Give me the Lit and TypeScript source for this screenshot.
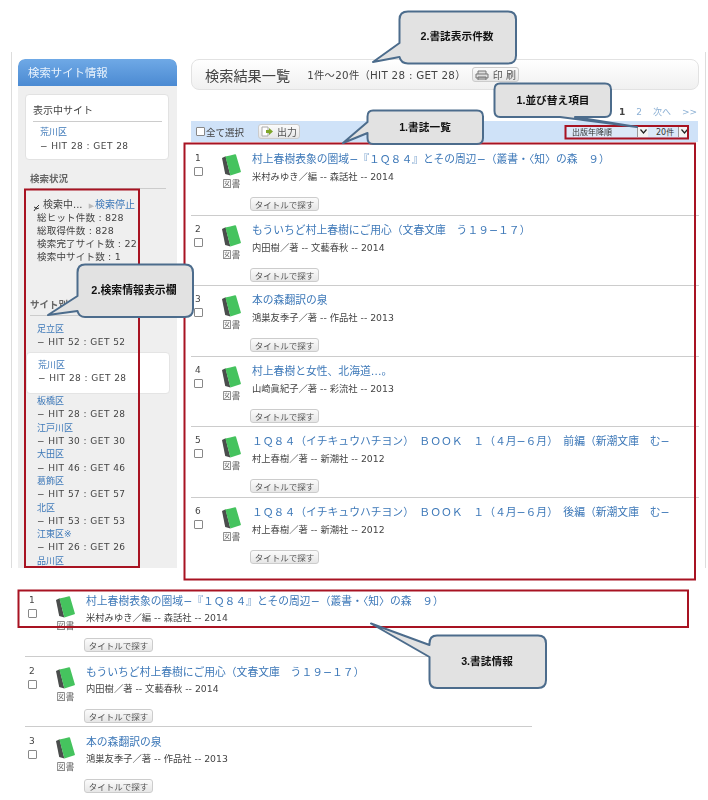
import { LitElement, html, css, svg } from "lit";
import { customElement } from "lit/decorators.js";

const BOOKS = [
  { t: "村上春樹表象の圏域−『１Ｑ８４』とその周辺−（叢書・〈知〉の森　９）", a: "米村みゆき／編 -- 森話社 -- 2014" },
  { t: "もういちど村上春樹にご用心（文春文庫　う１９−１７）", a: "内田樹／著 -- 文藝春秋 -- 2014" },
  { t: "本の森翻訳の泉", a: "鴻巣友季子／著 -- 作品社 -- 2013" },
  { t: "村上春樹と女性、北海道…。", a: "山崎眞紀子／著 -- 彩流社 -- 2013" },
  { t: "１Ｑ８４（イチキュウハチヨン）　ＢＯＯＫ　１（４月−６月）　前編（新潮文庫　む−", a: "村上春樹／著 -- 新潮社 -- 2012" },
  { t: "１Ｑ８４（イチキュウハチヨン）　ＢＯＯＫ　１（４月−６月）　後編（新潮文庫　む−", a: "村上春樹／著 -- 新潮社 -- 2012" },
];

const SITES = [
  { n: "足立区", h: 52 },
  { n: "荒川区", h: 28, on: true },
  { n: "板橋区", h: 28 },
  { n: "江戸川区", h: 30 },
  { n: "大田区", h: 46 },
  { n: "葛飾区", h: 57 },
  { n: "北区", h: 53 },
  { n: "江東区※", h: 26 },
  { n: "品川区", h: 0 },
];

const bookIcon = html`<svg class="book" width="19" height="22" viewBox="0 0 19 22">
  <path d="M0 4 L3.6 2.2 L8.4 21.4 L3.2 20 Z" fill="#4a4d4c"/>
  <path d="M3.4 2.4 Q8 1.4 13 .2 Q13.8 0 14 .8 L18.9 17.4 Q19 18 18.4 18.2 L8.4 21.4 Z" fill="#45c35e"/>
</svg>`;

function callout(d: string, label: string, x: number, y: number, size = 10.7) {
  return svg`<path d=${d} fill="#e2e2e2" stroke="#4c6c8c" stroke-width="2" stroke-linejoin="round"/>
    <text x=${x} y=${y} text-anchor="middle" font-size=${size} font-weight="700" fill="#111" font-family="'Liberation Sans','Noto Sans CJK JP',sans-serif">${label}</text>`;
}

@customElement("app-root")
export class AppRoot extends LitElement {
  static styles = css`
    :host {
      display: block;
      position: relative;
      width: 708px;
      height: 800px;
      overflow: hidden;
      background: #fff;
      font-family: "DejaVu Sans", "Noto Sans CJK JP", sans-serif;
      font-size: 9px;
      color: #444;
    }
    a { color: #3d78b8; text-decoration: none; }
    .soft { filter: blur(0.35px); padding-top: 52px; }
    .shot {
      height: 516px;
      margin: 0 2px 0 11px;
      padding: 7px 6px 0 6px;
      box-sizing: border-box;
      border-left: 1px solid #ddd;
      border-right: 1px solid #ddd;
      display: flex;
      gap: 14px;
    }
    .side {
      width: 159px;
      height: 509px;
      flex: none;
      overflow: hidden;
      background: #efefef;
      border-radius: 7px 7px 0 0;
      line-height: 13.3px;
    }
    .side-h {
      height: 27px;
      padding-left: 10px;
      display: flex;
      align-items: center;
      color: #e8f2fc;
      font-size: 11.4px;
      font-family: "Noto Sans CJK JP", sans-serif;
      background: linear-gradient(#6fa9e6, #4b8ad2);
      border-radius: 7px 7px 0 0;
    }
    .cur {
      margin: 8px 8px 0 7px;
      height: 66px;
      box-sizing: border-box;
      padding: 9px 6px 0 7px;
      background: #fff;
      border: 1px solid #e2e2e2;
      border-radius: 4px;
    }
    .cur h4, .hd {
      margin: 0;
      font-weight: 400;
      font-size: 9.5px;
      color: #444;
      border-bottom: 1px solid #ccc;
    }
    .cur h4 { padding-bottom: 4px; font-size: 10px; }
    .cur .site { margin: 4px 0 0 7px; }
    .hd {
      margin: 12px 11px 0 12px;
      padding-bottom: 3px;
      font-weight: 700;
      color: #666;
    }
    .status {
      margin: 8px 0 0 19px;
      height: 89px;
      position: relative;
      font-size: 9.5px;
      letter-spacing: .2px;
      white-space: nowrap;
    }
    .status .run { padding-left: 6px; padding-top: 1px; height: 12.3px; font-size: 10px; letter-spacing: 0; }
    .status .tri { color: #bbb; font-size: 7px; margin: 0 1px 0 3px; }
    .spin { position: absolute; left: -4px; top: 7px; color: #444; }
    .site { white-space: nowrap; letter-spacing: .45px; }
    .site a { display: block; letter-spacing: 0; }
    .list { margin-top: 7px; padding: 0 7px 0 19px; }
    .list .site.on {
      margin: 3px 0 1px -11px;
      height: 42px;
      padding: 6px 0 0 11px;
      box-sizing: border-box;
      background: #fff;
      border: 1px solid #e4e4e4;
      border-radius: 4px;
    }
    .main { flex: 1; min-width: 0; }
    .title {
      height: 31px;
      box-sizing: border-box;
      padding: 0 0 0 13px;
      display: flex;
      align-items: center;
      border: 1px solid #e2e2e2;
      border-radius: 8px;
      background: linear-gradient(#fff, #f0f0f0);
    }
    .title b {
      font-weight: 400;
      font-size: 14.2px;
      color: #444;
      font-family: "Noto Sans CJK JP", sans-serif;
    }
    .title .cnt { margin-left: 17px; font-size: 10.3px; letter-spacing: .3px; white-space: nowrap; }
    .btn {
      display: inline-flex;
      align-items: center;
      justify-content: center;
      box-sizing: border-box;
      border: 1px solid #ccc;
      border-radius: 3px;
      background: linear-gradient(#fbfbfb, #e6e6e6);
      color: #555;
      white-space: nowrap;
    }
    .print { margin-left: 6px; width: 47px; height: 15px; gap: 4px; font-size: 10px; }
    .pager {
      margin-top: 12px;
      height: 19px;
      padding-right: 2px;
      display: flex;
      justify-content: flex-end;
      align-items: center;
      gap: 11px;
      font-size: 9px;
      color: #8cb0d4;
    }
    .pager b { color: #444; }
    .pager a { color: inherit; }
    .bar {
      height: 21px;
      margin-right: 1px;
      padding: 0 9px 0 5px;
      display: flex;
      align-items: center;
      background: #cfe2f8;
      font-size: 9.5px;
    }
    .cb {
      display: block;
      width: 9px;
      height: 9px;
      flex: none;
      border: 1px solid #888;
      background: #fff;
      box-sizing: border-box;
      border-radius: 1px;
    }
    .bar .lab { margin-left: 1px; }
    .out { margin-left: 14px; width: 42px; height: 15px; gap: 3px; font-size: 10px; }
    .sels { margin-left: auto; display: flex; font-size: 8px; }
    .sel {
      height: 11px;
      display: flex;
      align-items: center;
      justify-content: space-between;
      padding-left: 5px;
      color: #333;
      background: #dce9f8;
    }
    .sel i {
      width: 11px;
      height: 11px;
      display: flex;
      align-items: center;
      justify-content: center;
      background: #f4f4f4;
      border-left: 1px solid #999;
      box-sizing: border-box;
    }
    .s1 { width: 81px; box-sizing: border-box; }
    .s2 { width: 41px; box-sizing: border-box; padding-left: 8px; }
    .row {
      height: 70.5px;
      box-sizing: border-box;
      border-bottom: 1px solid #ccc;
      display: flex;
      padding: 8px 0 0 3px;
    }
    .list-main { margin-top: 3px; }
    .list-main .row:last-child { border-bottom: 0; }
    .nc { width: 28px; flex: none; line-height: 10px; }
    .nc .num { padding-left: 1px; display: block; }
    .nc .cb { margin-top: 4px; }
    .ic { width: 30px; flex: none; margin-top: 1px; text-align: center; font-size: 9.5px; color: #666; line-height: 12px; }
    .ic .tp { display: block; margin-top: 2px; padding-right: 11px; font-size: 9px; white-space: nowrap; }
    .ic svg { display: block; }
    .tx { flex: 1; min-width: 0; white-space: nowrap; }
    .tx a { display: block; font-size: 10.8px; line-height: 14px; }
    .tx p { margin: 4px 0 0; line-height: 12px; font-size: 9.3px; color: #444; }
    .find { margin: 14px 0 0 -2px; width: 69px; height: 14px; font-size: 8.5px; }
    .lower { margin: 18px 0 0 25px; width: 507px; height: 220px; }
    .lower .row { padding-top: 9px; }
    .lower .row:last-child { border-bottom: 0; }
    .lower .tx p { margin-top: 3px; }
    .over { position: absolute; left: 0; top: 0; pointer-events: none; }
  `;

  private row(b: { t: string; a: string }, i: number) {
    return html`<div class="row">
      <div class="nc"><span class="num">${i + 1}</span><span class="cb"></span></div>
      <div class="ic">${bookIcon}<span class="tp">図書</span></div>
      <div class="tx">
        <a href="#">${b.t}</a>
        <p>${b.a}</p>
        <span class="btn find">タイトルで探す</span>
      </div>
    </div>`;
  }

  render() {
    return html`
      <div class="soft">
        <div class="shot">
          <aside class="side">
            <div class="side-h">検索サイト情報</div>
            <div class="cur">
              <h4>表示中サイト</h4>
              <div class="site"><a href="#">荒川区</a>− HIT 28 : GET 28</div>
            </div>
            <div class="hd">検索状況</div>
            <div class="status">
              <svg class="spin" width="7" height="8" viewBox="0 0 7 8"><path d="M1 7 L3 4 L1 3 M3 4 L6 1 M3 5 L6 4" stroke="#333" fill="none" stroke-width="1"/></svg>
              <div class="run">検索中... <span class="tri">▶</span><a href="#">検索停止</a></div>
              <div>総ヒット件数 : 828</div>
              <div>総取得件数 : 828</div>
              <div>検索完了サイト数 : 22</div>
              <div>検索中サイト数 : 1</div>
            </div>
            <div class="hd">サイト別</div>
            <div class="list">
              ${SITES.map((s) => html`<div class="site ${s.on ? "on" : ""}"><a href="#">${s.n}</a>${s.h ? `− HIT ${s.h} : GET ${s.h}` : ""}</div>`)}
            </div>
          </aside>
          <main class="main">
            <div class="title">
              <b>検索結果一覧</b>
              <span class="cnt">1件～20件（HIT 28 : GET 28）</span>
              <span class="btn print">
                <svg width="14" height="10" viewBox="0 0 14 10"><path d="M3 4V1h8v3M1 4h12v4H1zM3 7h8v3H3z" fill="#ddd" stroke="#777" stroke-width="1"/></svg>印 刷
              </span>
            </div>
            <div class="pager"><b>1</b><a href="#">2</a><span>次へ</span><span>&gt;&gt;</span></div>
            <div class="bar">
              <span class="cb"></span><span class="lab">全て選択</span>
              <span class="btn out">
                <svg width="13" height="11" viewBox="0 0 13 11"><path d="M1 1h6v9H1z" fill="#fff" stroke="#aaa"/><path d="M5 4h3V2l4 3.5L8 9V7H5z" fill="#7fa62a"/></svg>出力
              </span>
              <div class="sels">
                <div class="sel s1">出版年降順<i><svg width="7" height="5" viewBox="0 0 7 5"><path d="M.5 .5L3.5 4L6.5 .5" fill="none" stroke="#222" stroke-width="1.2"/></svg></i></div>
                <div class="sel s2">20件<i><svg width="7" height="5" viewBox="0 0 7 5"><path d="M.5 .5L3.5 4L6.5 .5" fill="none" stroke="#222" stroke-width="1.2"/></svg></i></div>
              </div>
            </div>
            <div class="list-main">${BOOKS.map((b, i) => this.row(b, i))}</div>
          </main>
        </div>
        <div class="lower">${BOOKS.slice(0, 3).map((b, i) => this.row(b, i))}</div>
      </div>
      <svg class="over" width="708" height="800" viewBox="0 0 708 800">
        <g fill="none" stroke="#a81322" stroke-width="2">
          <rect x="25" y="189.5" width="114" height="377.5"/>
          <rect x="184.5" y="143.5" width="510.5" height="436"/>
          <rect x="565.5" y="126" width="122.5" height="12.5"/>
          <rect x="18.5" y="590.5" width="669.5" height="36.5"/>
        </g>
        ${callout("M408 11.5H508Q516 11.5 516 19.5V55.5Q516 63.5 508 63.5H408Q401 63.5 399.5 57L373 62L399.5 43V19.5Q399.5 11.5 408 11.5Z", "2.書誌表示件数", 457, 40)}
        ${callout("M500 83.5H605Q611 83.5 611 89.5V111Q611 117 605 117H575L637 127L560 117H500Q494.5 117 494.5 111V89.5Q494.5 83.5 500 83.5Z", "1.並び替え項目", 553, 104)}
        ${callout("M373 110.5H477Q483 110.5 483 116.5V138Q483 144 477 144H373Q367.5 144 367.5 138V133L343 143L367.5 122V116.5Q367.5 110.5 373 110.5Z", "1.書誌一覧", 425, 131)}
        ${callout("M85 264.5H185Q193 264.5 193 272.5V309Q193 317 185 317H85Q79 317 77.5 311L48 315L77.5 296V272.5Q77.5 264.5 85 264.5Z", "2.検索情報表示欄", 134, 294, 10.9)}
        ${callout("M437 635.5H538Q546 635.5 546 643.5V680Q546 688 538 688H437Q429.5 688 429.5 680V657L371 623.5L429.5 645V643.5Q429.5 635.5 437 635.5Z", "3.書誌情報", 487, 665)}
      </svg>
    `;
  }
}
